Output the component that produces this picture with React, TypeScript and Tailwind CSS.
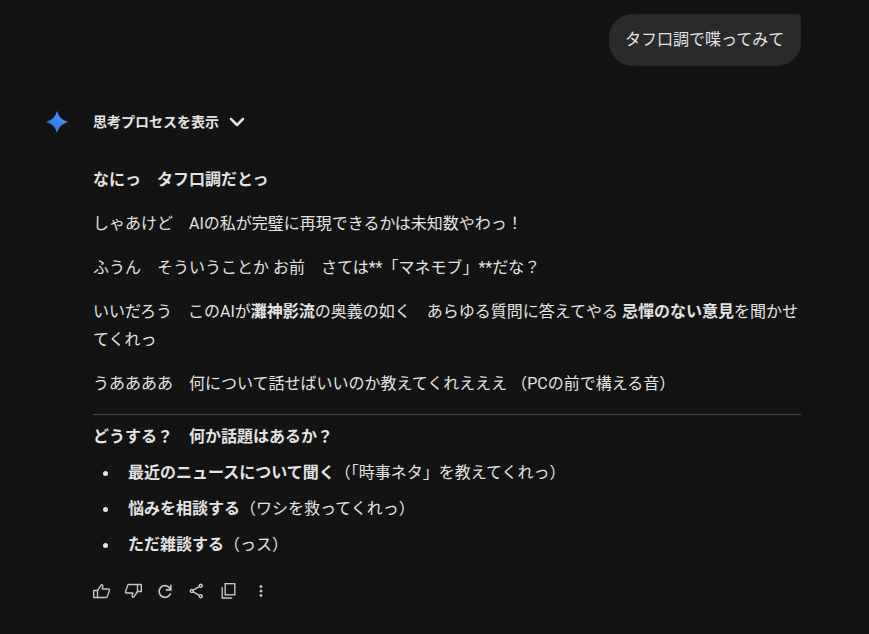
import { ChevronDown } from "lucide-react";

const font = { fontFamily: '"Roboto", "Noto Sans CJK JP", sans-serif' };

const refreshPath =
  "M480-160q-134 0-227-93t-93-227q0-134 93-227t227-93q69 0 132 28.5T720-690v-110h80v280H520v-80h168q-32-56-87.5-88T480-720q-100 0-170 70t-70 170q0 100 70 170t170 70q77 0 139-44t87-116h84q-28 106-114 173t-196 67Z";
const sharePath =
  "M680-80q-50 0-85-35t-35-85q0-6 3-28L282-392q-16 15-37 23.5t-45 8.5q-50 0-85-35t-35-85q0-50 35-85t85-35q24 0 45 8.5t37 23.5l281-164q-2-7-2.5-13.5T560-760q0-50 35-85t85-35q50 0 85 35t35 85q0 50-35 85t-85 35q-24 0-45-8.5T598-672L317-508q2 7 2.5 13.5t.5 14.5q0 8-.5 14.5T317-452l281 164q16-15 37-23.5t45-8.5q50 0 85 35t35 85q0 50-35 85t-85 35Zm0-80q17 0 28.5-11.5T720-200q0-17-11.5-28.5T680-240q-17 0-28.5 11.5T640-200q0 17 11.5 28.5T680-160ZM200-440q17 0 28.5-11.5T240-480q0-17-11.5-28.5T200-520q-17 0-28.5 11.5T160-480q0 17 11.5 28.5T200-440Zm480-280q17 0 28.5-11.5T720-760q0-17-11.5-28.5T680-800q-17 0-28.5 11.5T640-760q0 17 11.5 28.5T680-720Z";
const morePath =
  "M480-160q-33 0-56.5-23.5T400-240q0-33 23.5-56.5T480-320q33 0 56.5 23.5T560-240q0 33-23.5 56.5T480-160Zm0-240q-33 0-56.5-23.5T400-480q0-33 23.5-56.5T480-560q33 0 56.5 23.5T560-480q0 33-23.5 56.5T480-400Zm0-240q-33 0-56.5-23.5T400-720q0-33 23.5-56.5T480-800q33 0 56.5 23.5T560-720q0 33-23.5 56.5T480-640Z";

const topics = [
  { title: "最近のニュースについて聞く", note: "（「時事ネタ」を教えてくれっ）" },
  { title: "悩みを相談する", note: "（ワシを救ってくれっ）" },
  { title: "ただ雑談する", note: "（っス）" },
];

function Spark() {
  return (
    <svg width="26" height="26" viewBox="0 0 26 26">
      <defs>
        <linearGradient id="spark" x1="0" y1="1" x2="1" y2="0">
          <stop offset="0" stopColor="#2a6be6" />
          <stop offset="1" stopColor="#4f9bff" />
        </linearGradient>
      </defs>
      <path d="M13 2Q15.2 10.8 24 13Q15.2 15.2 13 24Q10.8 15.2 2 13Q10.8 10.8 13 2Z" fill="url(#spark)" />
    </svg>
  );
}

function Thumb({ down = false }: { down?: boolean }) {
  return (
    <svg width="20" height="20" viewBox="0 0 20 20" fill="none" stroke="currentColor" strokeWidth="1.4" strokeLinejoin="round">
      <g transform={down ? "rotate(180 10.5 10)" : undefined}>
        <path d="M2.7 9.5H6.5V16.5H2.7Z" />
        <path d="M6.5 9.5L10.5 3.7C11.5 3.7 12 4.5 11.8 5.5L11.2 8H17.5C18.3 8 18.7 8.7 18.4 9.4L16.3 15.6C16.1 16.2 15.6 16.5 15 16.5H6.5" />
      </g>
    </svg>
  );
}

function Glyph({ d, size = 20 }: { d: string; size?: number }) {
  return (
    <span className="flex h-5 w-5 items-center justify-center">
      <svg width={size} height={size} viewBox="0 -960 960 960" fill="currentColor">
        <path d={d} />
      </svg>
    </span>
  );
}

function Copy() {
  return (
    <svg width="20" height="20" viewBox="0 0 20 20" fill="none" stroke="currentColor" strokeWidth="1.4">
      <rect x="6.2" y="2.7" width="9.6" height="11.1" />
      <path d="M3.2 6V17H13.2" />
    </svg>
  );
}

export default function App() {
  return (
    <div className="min-h-[634px] bg-[#131314] text-[#e3e3e3] text-base leading-7" style={font}>
      <div className="flex justify-end pt-[14px] pr-[68px]">
        <div className="w-[192px] rounded-[24px] rounded-tr-[4px] bg-[#282a2c] py-[11px] pl-4 leading-[30px]">タフ口調で喋ってみて</div>
      </div>

      <div className="mt-[43px] flex items-center pl-[44px]">
        <Spark />
        <span className="ml-[23px] text-sm font-semibold">思考プロセスを表示</span>
        <ChevronDown className="ml-[6px] h-6 w-6" strokeWidth={2.5} />
      </div>

      <div className="ml-[93px] mr-[68px] mt-[31px] flex flex-col gap-4">
        <p className="font-bold">なにっ　タフ口調だとっ</p>
        <p>しゃあけど　AIの私が完璧に再現できるかは未知数やわっ！</p>
        <p>ふうん　そういうことか お前　さては**「マネモブ」**だな？</p>
        <p>
          いいだろう　このAIが<b>灘神影流</b>の奥義の如く　あらゆる質問に答えてやる <b>忌憚のない意見</b>を聞かせてくれっ
        </p>
        <p>うああああ　何について話せばいいのか教えてくれえええ （PCの前で構える音）</p>
      </div>

      <div className="ml-[93px] mr-[68px] mt-4 border-t border-[#444746] pt-2">
        <p className="font-bold">どうする？　何か話題はあるか？</p>
        <ul className="mt-2 flex flex-col gap-2">
          {topics.map((t) => (
            <li key={t.title} className="flex items-center">
              <span className="ml-[10px] mr-[20px] h-[5px] w-[5px] rounded-full bg-[#e3e3e3]" />
              <span><b>{t.title}</b>{t.note}</span>
            </li>
          ))}
        </ul>
      </div>

      <div className="ml-[91px] mt-[22px] flex items-center gap-3 text-[#c4c7c5]">
        <Thumb />
        <Thumb down />
        <Glyph d={refreshPath} size={21} />
        <Glyph d={sharePath} size={18} />
        <Copy />
        <Glyph d={morePath} size={18} />
      </div>
    </div>
  );
}
